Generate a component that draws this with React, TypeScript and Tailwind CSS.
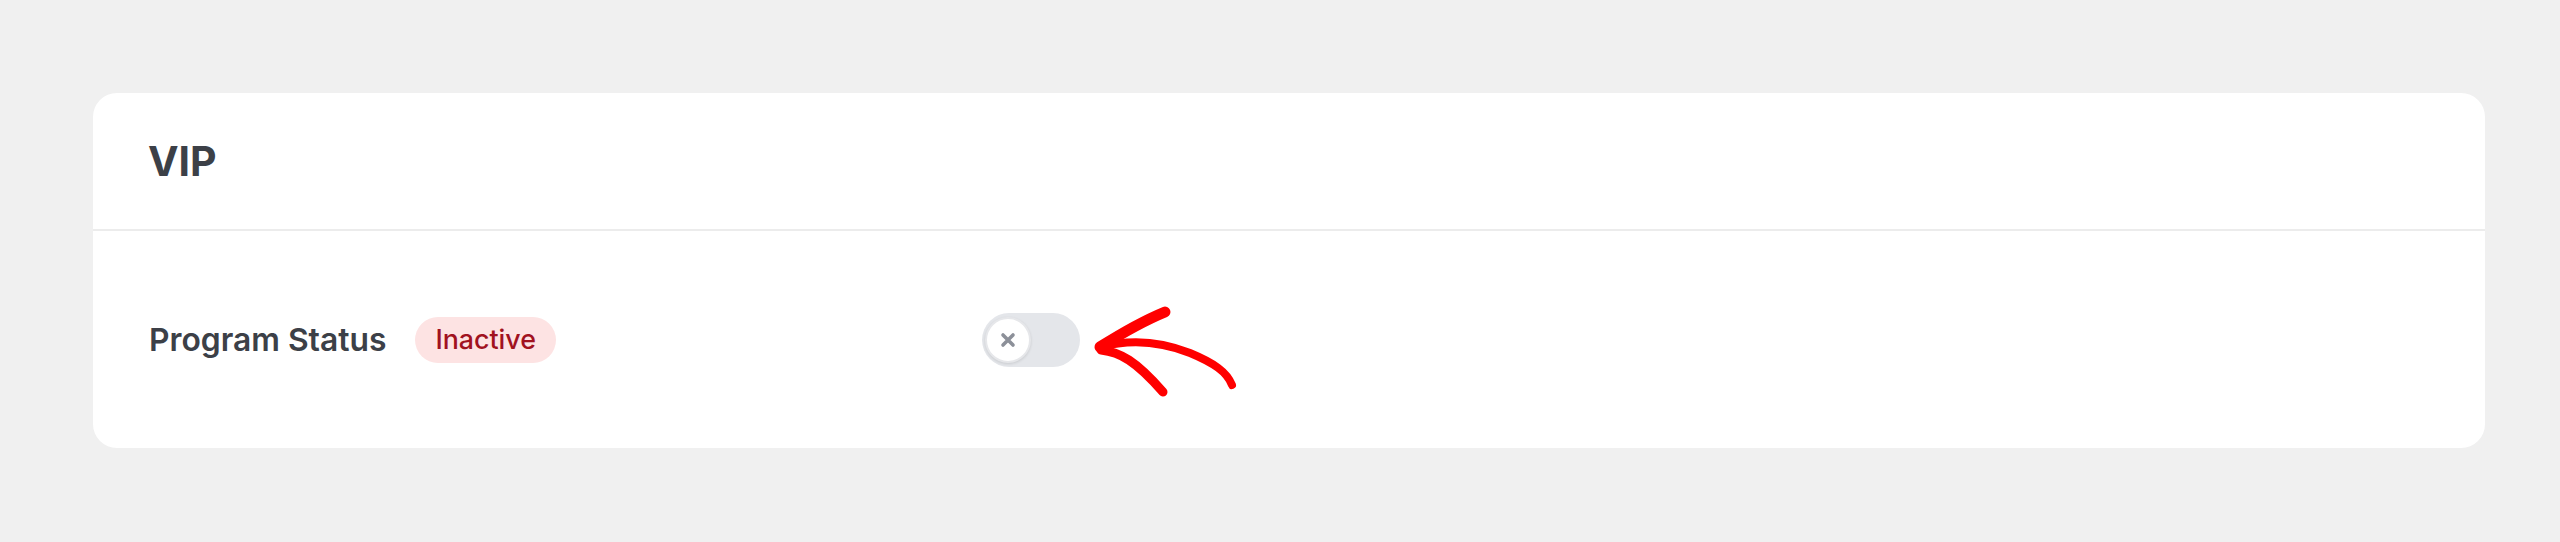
import { useState } from "react"

function StatusToggle({ on, onChange }: { on: boolean; onChange: (v: boolean) => void }) {
  return (
    <button
      onClick={() => onChange(!on)}
      className={`relative flex items-center w-[98px] h-[54px] rounded-full px-[3px] ${on ? "bg-[#16a34a]" : "bg-[#e4e6ea]"}`}
    >
      <span
        className={`flex items-center justify-center w-[46px] h-[46px] rounded-full bg-white border-2 border-[#e6e7ea] shadow-[0_1px_3px_rgba(0,0,0,0.12)] ${on ? "ml-[46px]" : "ml-0"}`}
      >
        <svg width="16" height="16" viewBox="0 0 16 16">
          <path d="M3 3 L13 13 M13 3 L3 13" stroke="#8c9099" strokeWidth="3.6" strokeLinecap="round" />
        </svg>
      </span>
    </button>
  )
}

export default function App() {
  const [active, setActive] = useState(false)

  return (
    <div className="min-h-[542px] bg-[#f0f0f0] pl-[93px] pr-[75px] pt-[93px] pb-[94px] font-['Inter',sans-serif]">
      <div className="bg-white rounded-[24px]">
        {/* Header */}
        <div className="h-[138px] flex items-center px-[55px] border-b-2 border-[#ececec]">
          <h2 className="text-[41px] font-bold text-[#3c4047] leading-none">VIP</h2>
        </div>

        {/* Body */}
        <div className="h-[217px] flex items-center px-[56px]">
          <div className="w-[833px] flex items-center gap-[29px]">
            <span className="text-[31.8px] font-semibold text-[#3c4047] leading-none">Program Status</span>
            <span className="h-[46px] px-[20px] flex items-center rounded-full bg-[#fde3e3] text-[#a1121f] text-[26.8px] font-medium leading-none">
              {active ? "Active" : "Inactive"}
            </span>
          </div>
          <div className="relative">
            <StatusToggle on={active} onChange={setActive} />
            <svg
              className="absolute left-[108px] top-[-13px]"
              width="160"
              height="100"
              viewBox="0 0 160 100"
              fill="none"
            >
              <g stroke="#ff0000" strokeLinecap="round" strokeLinejoin="round">
                <path d="M75 12 C 58 19, 40 28, 10 47" strokeWidth="11" />
                <path d="M10 47 C 40 39, 70 41, 100 53 C 124 63, 137 72, 142 85" strokeWidth="8" />
                <path d="M11 50 C 30 52, 46 61, 73 92" strokeWidth="9" />
              </g>
            </svg>
          </div>
        </div>
      </div>
    </div>
  )
}
